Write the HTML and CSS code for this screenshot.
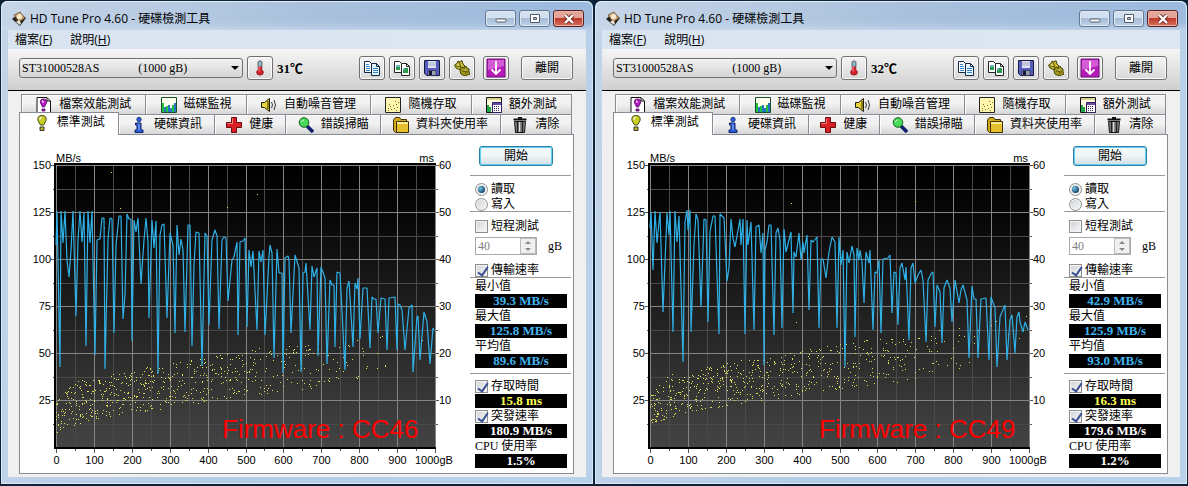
FILE: index.html
```html
<!DOCTYPE html>
<html lang="zh-Hant">
<head>
  <meta charset="UTF-8" />
  <title>HD Tune Pro 4.60 - 硬碟檢測工具</title>
  <link rel="stylesheet" href="styles.css">
</head>
<body>
  <svg class="sprite" aria-hidden="true">
    <symbol id="i-disk" viewBox="0 0 16 16">
      <path d="M1 8 8 2l7 5-6 8z" fill="#26211c"/>
      <path d="M3 4 9 1l5 6-6 4z" fill="#c9a36b" stroke="#5d4630" stroke-width=".7"/>
      <circle cx="8.500" cy="5.500" r="2.600" fill="#f6e8cf"/>
      <path d="m5 11 3-2 2 3-1 2z" fill="#e8e2d8"/>
    </symbol>
    <symbol id="i-temp" viewBox="0 0 16 18">
      <path d="M6 2q2-2 4 0v9q3 2 1 5-3 2-6 0-2-3 1-5z" fill="#d8202a" stroke="#8c1520"/>
      <path d="M6 2q2-2 4 0v5H6z" fill="#8fc0c8" stroke="#557f88"/>
      <path d="M7 7v6" stroke="#ff9a9a"/>
    </symbol>
    <symbol id="i-copy" viewBox="0 0 16 16">
      <path d="M.5 1.500h5l2 2v9h-7z" fill="#fff" stroke="#102a48"/>
      <path d="M7.500 3.500h5l3 3v9h-8z" fill="#e6f4ff" stroke="#102a48"/>
      <path d="M2 4.500h3M2 6.500h4M2 8.500h4M2 10.500h4M9 8.500h5M9 10.500h5M9 12.500h5" stroke="#2f86d0"/>
      <path d="M12.500 3.500v3h3" fill="none" stroke="#102a48"/>
    </symbol>
    <symbol id="i-copyimg" viewBox="0 0 16 16">
      <path d="M.5 1.500h5l2 2v9h-7z" fill="#fff" stroke="#222"/>
      <path d="M7.500 3.500h5l3 3v9h-8z" fill="#fff" stroke="#222"/>
      <path d="M2 5h4v5H2zM9 8h5v5H9z" fill="#2c9a4b"/>
      <path d="M2 5h4v2H2zM9 8h2v2H9z" fill="#6fb5c4"/>
      <path d="M12.500 3.500v3h3" fill="none" stroke="#222"/>
    </symbol>
    <symbol id="i-save" viewBox="0 0 16 16">
      <path d="M.5.5h15v15h-13l-2-2z" fill="#5560bc" stroke="#15183c"/>
      <path d="M4 1h8v7H4z" fill="#dfe3f4"/>
      <path d="M4 3h8M4 5h8" stroke="#a5abc8"/>
      <path d="M4 10.500h8v5H4z" fill="#9aa0ae" stroke="#15183c" stroke-width=".6"/>
      <path d="M5 11h3v4H5z" fill="#15183c"/>
    </symbol>
    <symbol id="i-tools" viewBox="0 0 16 16">
      <path d="M.5 5 3 3.500 4 1l2 1 2-1.500L9 4l2 2-1 2-3 2-3-1-2-1z" fill="#c2b92e" stroke="#4a4508"/>
      <path d="m6 11 1-3 2-1 1 1 2-2 1 2 2 1v3l1 2-3 1-1 1-3-1-2-1z" fill="#a39a1c" stroke="#4a4508"/>
      <path d="m5 2 2 6M2 6l5 1M10 8l2 6M8 11l6 1" stroke="#625b0c"/>
      <path d="M3 5h2M10 10h2" stroke="#f4efb0"/>
    </symbol>
    <symbol id="i-down" viewBox="0 0 20 20">
      <path d="M1 1h18v18H1z" fill="#b31ab8" stroke="#71107a"/>
      <path d="M2 2h16v6L2 12z" fill="#d45bd6"/>
      <path d="M10 3v13M5.500 11.500l4.500 4.500 4.500-4.500" fill="none" stroke="#fff" stroke-width="1.800"/>
    </symbol>
    <symbol id="i-file" viewBox="0 0 16 16">
      <path d="M1 .5h10l3.500 3.500v11.500H1z" fill="#fff" stroke="#111"/>
      <path d="M11 1v3h3" fill="none" stroke="#111"/>
      <path d="M7.500 2q4 0 3 4L8.500 10h-2L4.500 6q-1-4 3-4z" fill="#b01cc0" stroke="#55085f" stroke-width=".8"/>
      <path d="M6 12h3v2H6z" fill="#b01cc0" stroke="#55085f" stroke-width=".8"/>
      <path d="M6 4h1v2" stroke="#fff" fill="none"/>
    </symbol>
    <symbol id="i-bars" viewBox="0 0 16 16">
      <path d="M.5.5h15v15H.5z" fill="#fffff0" stroke="#1a4b2a"/>
      <path d="M1 6h2v9H1zM5 9h2v6H5zM11 8h2v7h-2z" fill="#20c23a"/>
      <path d="M3 10h2v5H3zM7 8h2v7H7zM9 11h2v4H9zM13 6h2v9h-2z" fill="#2673c8"/>
    </symbol>
    <symbol id="i-sound" viewBox="0 0 16 16">
      <path d="M.5 5.500h3l5-4v13l-5-4h-3z" fill="#e6d23a" stroke="#1d1a05"/>
      <path d="M6 4h2v8H6z" fill="#8d8013"/>
      <path d="M10.500 5q2 3 0 6M13 3q3 5 0 10" fill="none" stroke="#333"/>
    </symbol>
    <symbol id="i-random" viewBox="0 0 16 16">
      <path d="M.5.5h15v15H.5z" fill="#fff7b0" stroke="#222"/>
      <path d="M3 11h1v1H3zM5 9h1v1H5zM6 12h1v1H6zM8 8h1v1H8zM9 11h1v1H9zM11 7h1v1h-1zM12 10h1v1h-1zM4 7h1v1H4zM10 4h1v1h-1zM13 5h1v1h-1zM11 13h1v1h-1zM3 13h1v1H3z" fill="#7a6a10"/>
    </symbol>
    <symbol id="i-extra" viewBox="0 0 16 16">
      <path d="M.5.5h15v15H.5z" fill="#fffbe0" stroke="#111"/>
      <path d="M1 1h14v2H1z" fill="#d8cf90"/>
      <path d="M1 8h2v2h2v5H1z" fill="#1ea54a"/>
      <path d="M6.500 5.500h9v10h-9z" fill="#fff" stroke="#31205f"/>
      <path d="M7 6h8v2H7z" fill="#6d4aa8"/>
      <path d="M8 9.500h6M8 11.500h6M8 13.500h6" stroke="#31205f" stroke-dasharray="1 1"/>
    </symbol>
    <symbol id="i-bulb" viewBox="0 0 16 16">
      <path d="M8 .6q5 0 4 5L9.500 10h-3L4 5.600q-1-5 4-5z" fill="#c9cf26" stroke="#45480a"/>
      <path d="M6 5V3l2-1" stroke="#fff" fill="none"/>
      <path d="M6 12h4v3.500H6z" fill="#b8b820" stroke="#333"/>
    </symbol>
    <symbol id="i-info" viewBox="0 0 16 16">
      <circle cx="8" cy="2.500" r="2.200" fill="#2c62e0" stroke="#0c1f66" stroke-width=".8"/>
      <path d="M4.500 6h5.500v7h2v2.500h-8V13H6V8H4.500z" fill="#2c62e0" stroke="#0c1f66"/>
      <path d="M8 7v6" stroke="#8fb4ff"/>
    </symbol>
    <symbol id="i-health" viewBox="0 0 16 16">
      <path d="M5.500.5h5v5h5v5h-5v5h-5v-5h-5v-5h5z" fill="#d81f24" stroke="#6b0a10"/>
      <path d="M6.500 6.500v-5M1.500 6.500h5" stroke="#f58080"/>
    </symbol>
    <symbol id="i-search" viewBox="0 0 16 16">
      <path d="m9 9 6 6" stroke="#10206a" stroke-width="3.500"/>
      <circle cx="6" cy="5.500" r="4.800" fill="#48d85a" stroke="#12601e"/>
      <path d="M3 5q1-2 3-2" stroke="#d8ffd8" fill="none"/>
    </symbol>
    <symbol id="i-folder" viewBox="0 0 16 16">
      <path d="M.5 3l2-2.500h4l1.500 2h5.500v13H2.500l-2-2z" fill="#d3a91c" stroke="#3f3004"/>
      <path d="M3.500 4.500h12v11h-12z" fill="#e6c02c" stroke="#3f3004"/>
      <path d="M4 5h11v2H4z" fill="#fbeb92"/>
    </symbol>
    <symbol id="i-trash" viewBox="0 0 16 16">
      <path d="M1.500 2.500h13M6 1h4" stroke="#111" stroke-width="2"/>
      <path d="M2.500 4.500h11l-1 11h-9z" fill="#8a8a8a" stroke="#111"/>
      <path d="M5.500 5v10M10.500 5v10" stroke="#222" stroke-width="1.500"/>
      <path d="M7.500 5v10" stroke="#e0e0e0"/>
    </symbol>
  </svg>

  <main class="desktop" id="desktop"></main>

  <template id="windowTemplate">
    <form class="window">
      <header class="titlebar">
        <svg class="icon"><use href="#i-disk"/></svg>
        <h1>HD Tune Pro 4.60 - 硬碟檢測工具</h1>
        <button type="button" class="caption" aria-label="最小化"><svg viewBox="0 0 12 10"><rect x="1" y="5" width="10" height="3" rx="1" fill="#fff" stroke="#555d6b"/></svg></button>
        <button type="button" class="caption" aria-label="最大化"><svg viewBox="0 0 12 10"><path d="M1.500.5h9v8h-9zM4.500 3.500h3v2h-3z" fill="#fff" fill-rule="evenodd" stroke="#555d6b"/></svg></button>
        <button type="button" class="caption close" aria-label="關閉"><svg viewBox="0 0 12 10"><path d="m2 1 8 8m0-8-8 8" stroke="#6b2a24" stroke-width="4"/><path d="m2 1 8 8m0-8-8 8" stroke="#fff" stroke-width="2.400"/></svg></button>
      </header>

      <nav class="menubar">
        <button type="button">檔案(<u>F</u>)</button>
        <button type="button">說明(<u>H</u>)</button>
      </nav>

      <div class="toolbar">
        <label class="combo">
          <select aria-label="硬碟">
            <option>ST31000528AS&nbsp;&nbsp;&nbsp;&nbsp;&nbsp;&nbsp;&nbsp;&nbsp;&nbsp;&nbsp;&nbsp;&nbsp;&nbsp;(1000 gB)</option>
          </select>
        </label>
        <button type="button" class="tool" aria-label="溫度"><svg class="icon"><use href="#i-temp"/></svg></button>
        <strong class="temperature"></strong>
        <button type="button" class="tool" aria-label="複製文字"><svg class="icon"><use href="#i-copy"/></svg></button>
        <button type="button" class="tool" aria-label="複製圖片"><svg class="icon"><use href="#i-copyimg"/></svg></button>
        <button type="button" class="tool" aria-label="儲存"><svg class="icon"><use href="#i-save"/></svg></button>
        <button type="button" class="tool" aria-label="選項"><svg class="icon"><use href="#i-tools"/></svg></button>
        <button type="button" class="tool update" aria-label="更新"><svg class="icon large"><use href="#i-down"/></svg></button>
        <button type="button" class="tool exit">離開</button>
      </div>

      <div class="content">
        <div class="tabs back">
          <button type="button"><svg class="icon"><use href="#i-file"/></svg>檔案效能測試</button>
          <button type="button"><svg class="icon"><use href="#i-bars"/></svg>磁碟監視</button>
          <button type="button"><svg class="icon"><use href="#i-sound"/></svg>自動噪音管理</button>
          <button type="button"><svg class="icon"><use href="#i-random"/></svg>隨機存取</button>
          <button type="button"><svg class="icon"><use href="#i-extra"/></svg>額外測試</button>
        </div>
        <div class="tabs front">
          <button type="button" class="active"><svg class="icon"><use href="#i-bulb"/></svg>標準測試</button>
          <button type="button"><svg class="icon"><use href="#i-info"/></svg>硬碟資訊</button>
          <button type="button"><svg class="icon"><use href="#i-health"/></svg>健康</button>
          <button type="button"><svg class="icon"><use href="#i-search"/></svg>錯誤掃瞄</button>
          <button type="button"><svg class="icon"><use href="#i-folder"/></svg>資料夾使用率</button>
          <button type="button"><svg class="icon"><use href="#i-trash"/></svg>清除</button>
        </div>

        <div class="panel">
          <svg class="chart" viewBox="0 0 450 338"></svg>

          <aside class="side">
            <button type="button" class="start">開始</button>
            <hr>
            <label class="row"><input type="radio" name="mode" checked>讀取</label>
            <label class="row"><input type="radio" name="mode">寫入</label>
            <hr class="tight">
            <label class="row"><input type="checkbox">短程測試</label>
            <div class="stroke">
              <span class="spin"><input type="text" value="40" aria-label="容量" disabled><span class="arrows"><i></i><i class="down"></i></span></span>
              gB
            </div>
            <label class="row"><input type="checkbox" checked>傳輸速率</label>
            <hr class="flush">
            <div class="row">最小值</div>
            <output class="speed" data-key="min"></output>
            <div class="row">最大值</div>
            <output class="speed" data-key="max"></output>
            <div class="row">平均值</div>
            <output class="speed" data-key="avg"></output>
            <hr class="last">
            <label class="row"><input type="checkbox" checked>存取時間</label>
            <output class="access" data-key="access"></output>
            <label class="row"><input type="checkbox" checked>突發速率</label>
            <output data-key="burst"></output>
            <div class="row">CPU 使用率</div>
            <output data-key="cpu"></output>
          </aside>
        </div>
      </div>
    </form>
  </template>

  <script src="script.js"></script>
</body>
</html>
```
FILE: styles.css
```css
* {
  box-sizing: border-box;
}

body {
  margin: 0;
  background: #0b2239;
  color: #000;
  font-family: "Liberation Serif", "Noto Sans CJK TC", serif;
  font-size: 12px;
  line-height: 15px;
}

button,
input,
select {
  font: inherit;
  color: inherit;
  margin: 0;
}

button {
  padding: 0;
  cursor: pointer;
}

.sprite {
  position: absolute;
  width: 0;
  height: 0;
}

.icon {
  width: 16px;
  height: 16px;
  flex: none;
}

.icon.large {
  width: 20px;
  height: 20px;
}

.desktop {
  display: grid;
  grid-template-columns: 1fr 1fr;
  min-height: 100vh;
}

/* window frame */
.window {
  display: flex;
  flex-direction: column;
  padding: 0 7px 7px;
  border: 1px solid #0b2239;
  border-bottom-width: 2px;
  border-radius: 7px 7px 0 0;
  background: linear-gradient(100deg, #c3d4e8, #b4cce6 45%, #b9d1ea);
  box-shadow: inset 0 0 0 1px #d9e9f8;
}

.titlebar {
  display: flex;
  align-items: center;
  gap: 3px;
  height: 29px;
  margin: 0 -6px;
  padding: 6px 8px 0 9px;
  border-radius: 6px 6px 0 0;
  background: linear-gradient(90deg, #c6d5e7, #a8c0dc 55%, #9cbade);
  box-shadow: inset 0 1px #e6f0fa, inset 0 -8px 8px -6px #cbdbed;
}

.titlebar h1 {
  flex: 1;
  margin: 0;
  font-family: "Open Sans", "Noto Sans CJK TC", sans-serif;
  font-size: 12px;
  font-weight: normal;
}

.caption {
  display: flex;
  align-items: center;
  justify-content: center;
  width: 31px;
  height: 17px;
  border: 1px solid #66788f;
  border-radius: 3px;
  background: linear-gradient(#d3e0ef 45%, #a7bdd6 50%, #bfd3ea);
  box-shadow: inset 0 0 0 1px #dfeaf6;
}

.caption svg {
  width: 12px;
  height: 10px;
}

.caption.close {
  border-color: #5c1c1c;
  background: linear-gradient(#e3a598 45%, #c0392b 50%, #d4705c);
  box-shadow: inset 0 0 0 1px #eab5aa;
}

.menubar {
  display: flex;
  gap: 18px;
  height: 19px;
  padding-left: 7px;
  background: linear-gradient(90deg, #d9e4f1, #dee7f1);
  font-family: "Open Sans", "Noto Sans CJK TC", sans-serif;
}

.menubar button {
  border: none;
  background: none;
}

/* toolbar */
.toolbar {
  display: flex;
  align-items: center;
  gap: 4px;
  height: 42px;
  padding: 0 13px 3px 11px;
  border-bottom: 1px solid #000;
  background: linear-gradient(#f5f5f5, #cfcfcf);
}

.combo {
  position: relative;
  width: 224px;
}

.combo select {
  appearance: none;
  display: block;
  width: 100%;
  height: 20px;
  padding: 0 2px;
  border: 1px solid #707070;
  border-radius: 3px;
  background: linear-gradient(#f2f2f2, #d4d4d4);
}

.combo::after {
  content: "";
  position: absolute;
  right: 4px;
  top: 8px;
  border: 4px solid transparent;
  border-top-color: #000;
}

.tool {
  display: flex;
  align-items: center;
  justify-content: center;
  width: 26px;
  height: 24px;
  border: 1px solid #707070;
  border-radius: 3px;
  background: linear-gradient(#f4f4f4, #d8d8d8);
  box-shadow: inset 0 0 0 1px #fafafa;
}

.temperature {
  flex: 1;
  font-size: 13px;
}

.tool.update {
  margin-left: 4px;
}

.tool.exit {
  width: 52px;
  margin-left: 8px;
}

/* tabs */
.content {
  flex: 1;
  padding: 3px 12px 3px 11px;
  background: #f0f0f0;
}

.tabs {
  display: flex;
  height: 20px;
  margin-right: 2px;
}

.tabs.back {
  margin-left: 2px;
}

.tabs button {
  flex: 1 1 auto;
  display: flex;
  align-items: center;
  justify-content: center;
  gap: 7px;
  padding: 0 2px;
  border: 1px solid #898c95;
  border-width: 1px 1px 0 0;
  background: linear-gradient(#f2f2f2 45%, #d6d6d6);
  box-shadow: inset 1px 1px #fbfbfb;
}

.tabs button:first-child {
  border-left-width: 1px;
}

.tabs .active {
  position: relative;
  height: 23px;
  margin-top: -2px;
  padding: 0 4px 3px;
  background: #fff;
}

.panel {
  display: flex;
  border: 1px solid #898c95;
  background: #fff;
}

.chart {
  flex: 1;
  min-width: 0;
  font-family: "Liberation Sans", sans-serif;
  font-size: 11px;
}

.chart .line {
  fill: none;
  stroke: #2fb0e6;
  stroke-width: 1.2;
  stroke-linejoin: bevel;
}

.chart .major {
  stroke: #858585;
}

.chart .minor {
  stroke: #4a4a4a;
}

.chart .dots {
  fill: #dede58;
}

.chart .firmware {
  fill: #f00;
  font-size: 26px;
}

/* result column */
.side {
  flex: none;
  width: 103px;
  padding: 11px 2px 0 0;
}

.side hr {
  height: 1px;
  margin: 9px 0 5px;
  border: none;
  background: #999;
}

.side hr.tight {
  margin: 0 0 6px;
}

.side hr.flush {
  margin: 0;
}

.side hr.last {
  margin: 5px 0 4px;
}

.start {
  display: block;
  width: 74px;
  height: 20px;
  margin-left: 9px;
  border: 1px solid #2c7fa6;
  border-radius: 3px;
  background: linear-gradient(#f1f6f9 45%, #d2dde3);
  box-shadow: inset 0 0 0 1px #5fd0f2;
}

.row {
  display: flex;
  align-items: center;
  gap: 3px;
  height: 15px;
  margin-left: 5px;
  padding-top: 1px;
  white-space: nowrap;
}

.row input {
  appearance: none;
  flex: none;
  position: relative;
  width: 13px;
  height: 13px;
  border: 1px solid #8e8f8f;
  background: linear-gradient(135deg, #cfd3d8, #f8f8f8);
  box-shadow: inset 0 0 0 1px #f4f4f4;
}

.row input[type="radio"] {
  border-radius: 50%;
}

.row input[type="radio"]:checked::after {
  content: "";
  position: absolute;
  inset: 2px;
  border-radius: 50%;
  background: radial-gradient(circle at 35% 35%, #6fc6e8, #123f63 75%);
}

.row input[type="checkbox"]:checked::after {
  content: "";
  position: absolute;
  left: 4px;
  top: 0;
  width: 4px;
  height: 9px;
  border: solid #3b4f93;
  border-width: 0 2px 2px 0;
  transform: rotate(35deg);
}

.stroke {
  display: flex;
  align-items: center;
  gap: 11px;
  margin: 4px 0 7px 5px;
}

.spin {
  display: flex;
  width: 62px;
  height: 18px;
  border: 1px solid #aaa;
}

.spin input {
  flex: 1;
  min-width: 0;
  padding: 0 2px;
  border: none;
  background: #fff;
  color: #808080;
}

.arrows {
  display: grid;
  width: 16px;
  border: 1px solid #bbb;
  background: #f0f0f0;
}

.arrows i {
  place-self: center;
  border: 3px solid transparent;
  border-top-width: 0;
  border-bottom-color: #888;
}

.arrows .down {
  border-width: 3px 3px 0;
  border-top-color: #888;
}

.side output {
  display: block;
  height: 14px;
  margin: 1px 4px 0 5px;
  background: #000;
  color: #fff;
  font-size: 13px;
  font-weight: bold;
  line-height: 14px;
  text-align: center;
}

.side .speed {
  color: #3fb4f0;
}

.side .access {
  color: #ffff50;
}
```
FILE: script.js
```js
// trace: transfer rate line, in chart units (x, y)
const runs = [
  {
    temperature: '31℃', firmware: 'CC46', labelX: 202, seed: 46, lift: 0,
    min: '39.3 MB/s', max: '125.8 MB/s', avg: '89.6 MB/s',
    access: '15.8 ms', burst: '180.9 MB/s', cpu: '1.5%',
    trace: '36,110 37,76 40,232 41,76 43,108 45,76 47,125 49,142 51,115 53,76 56,181 58,105 60,76 62,107 64,78 66,211 68,76 70,108 72,76 75,220 77,105 80,104 82,83 84,83 85,234 88,105 90,83 92,84 94,198 96,110 99,81 101,81 103,184 105,160 107,79 109,84 111,84 112,206 114,85 116,97 118,83 121,149 124,105 126,83 128,107 129,183 132,85 134,113 136,86 138,239 140,100 142,90 144,89 147,183 150,98 153,110 155,198 157,90 159,120 161,104 163,115 165,197 168,90 170,90 172,211 174,130 176,97 179,98 182,231 185,98 187,101 189,190 192,105 195,95 197,101 199,194 202,105 204,102 206,103 208,166 212,125 214,122 217,107 218,200 220,107 223,106 225,103 227,192 229,115 231,132 233,116 237,195 239,116 241,127 243,115 245,200 249,122 250,110 252,118 254,223 257,114 259,138 262,138 263,238 265,123 268,121 269,125 271,198 275,120 279,133 281,237 283,138 285,137 286,128 290,195 292,131 294,142 297,133 298,221 301,132 305,143 307,229 310,145 312,150 314,150 315,212 317,137 320,138 325,235 327,153 329,146 333,212 335,148 337,154 338,143 340,204 343,153 347,153 350,213 352,162 354,164 356,164 358,198 361,163 365,164 367,215 369,163 375,162 377,215 378,169 380,170 382,175 385,215 389,173 392,170 393,237 397,182 398,181 400,225 404,177 407,187 410,229 413,193 414,195',
    outliers: [[91, 37], [100, 73], [84, 93], [207, 72], [237, 59], [377, 196], [398, 197], [402, 205]]
  },
  {
    temperature: '32℃', firmware: 'CC49', labelX: 205, seed: 49, lift: 7,
    min: '42.9 MB/s', max: '125.9 MB/s', avg: '93.0 MB/s',
    access: '16.3 ms', burst: '179.6 MB/s', cpu: '1.2%',
    trace: '36,93 37,77 39,135 41,76 43,108 46,77 49,177 53,78 55,100 56,76 59,197 61,76 63,107 65,81 69,227 71,87 73,75 74,95 76,75 77,197 80,110 82,79 84,85 87,172 90,84 92,85 94,187 96,97 99,81 101,81 105,199 106,79 110,83 113,146 115,133 117,84 119,103 121,112 126,84 127,110 129,84 131,199 133,85 134,110 137,87 140,195 142,92 145,90 147,118 149,98 150,230 151,115 153,107 155,90 157,90 160,200 162,98 164,93 166,105 168,193 170,94 172,117 177,97 179,178 180,117 182,122 185,98 187,125 189,107 190,118 193,100 195,175 197,105 199,107 203,102 205,193 207,124 209,124 212,143 215,117 218,102 221,107 223,193 225,102 227,130 229,115 231,232 233,117 235,128 238,111 240,120 241,202 243,113 245,125 246,115 248,127 250,168 252,117 255,128 256,115 259,195 261,137 263,138 265,125 267,198 269,124 274,123 276,120 278,178 280,137 282,138 284,190 286,133 288,128 291,145 292,132 295,205 297,133 299,128 301,148 304,140 307,135 309,145 312,207 314,145 317,139 319,137 321,192 323,150 326,157 328,208 330,153 333,145 336,153 338,187 341,145 345,168 347,155 349,150 353,165 355,223 358,151 360,164 362,164 364,223 367,164 372,163 375,225 377,162 381,173 383,232 386,182 391,170 393,225 396,185 398,180 401,218 403,182 405,177 406,187 409,197 411,187 414,195',
    outliers: [[177, 68], [182, 187], [301, 66], [412, 181], [377, 190], [382, 186], [394, 199], [405, 203]]
  }
];

const LEFT = 36, RIGHT = 415, TOP = 30, BOTTOM = 312;

function random(seed) {
  return () => {
    seed = (seed * 16807) % 2147483647;
    return seed / 2147483647;
  };
}

// interpolate between [x, y] stops
function between(stops, x) {
  for (let i = 1; i < stops.length; i++) {
    const [x0, y0] = stops[i - 1], [x1, y1] = stops[i];
    if (x <= x1) return y0 + (y1 - y0) * (x - x0) / (x1 - x0);
  }
  return stops[stops.length - 1][1];
}

function accessDots(run) {
  const high = [[0, 266], [.05, 246], [.2, 235], [.5, 215], [.7, 205], [1, 192]];
  const low = [[0, 298], [.1, 284], [.2, 278], [.5, 261], [.7, 252], [1, 225]];
  const density = [[0, 1], [.3, .8], [.6, .5], [.7, .35], [.8, .2], [.86, .1], [.88, 0], [1, 0]];
  const next = random(run.seed * 991);
  const dots = run.outliers.slice();
  while (dots.length < 620) {
    const t = next(), keep = next(), depth = next();
    if (keep > between(density, t)) continue;
    const a = between(high, t), b = between(low, t);
    dots.push([Math.round(LEFT + t * 379), Math.round(a + (b - a) * depth - run.lift)]);
  }
  return dots.map(([x, y]) => `M${x} ${y}h1v1h-1z`).join('');
}

function drawChart(svg, run) {
  const id = 'bg' + run.firmware;
  let out = `<defs><linearGradient id="${id}" x2="0" y2="1"><stop stop-color="#000"/><stop offset=".2" stop-color="#080808"/><stop offset="1" stop-color="#444"/></linearGradient></defs>
    <rect x="34" y="28" width="382" height="286"/>
    <rect x="36" y="30" width="379" height="282" fill="url(#${id})"/>`;
  let minor = '', major = '', ticks = '', labels = '';

  for (let i = 0; i <= 20; i++) {
    const x = Math.round(LEFT + i * 18.95) + .5;
    const line = `M${x} ${TOP}V${BOTTOM}`;
    if (i % 2) minor += line; else major += line;
    ticks += `M${x} 314v${i % 2 ? 2 : 4}`;
    if (i % 2 === 0) {
      const gb = i * 50;
      labels += gb === 1000
        ? `<text x="395" y="329">1000gB</text>`
        : `<text x="${x}" y="329" text-anchor="middle">${gb}</text>`;
    }
  }
  for (let i = 0; i < 12; i++) {
    const y = Math.round(TOP + i * 23.5) + .5;
    const line = `M${LEFT} ${y}H${RIGHT}`;
    if (i % 2) minor += line; else major += line;
    ticks += `M${i % 2 ? 33 : 31} ${y}H34M416 ${y}h${i % 2 ? 2 : 3}`;
    if (i % 2 === 0) {
      labels += `<text x="31" y="${y + 3.5}" text-anchor="end">${150 - i * 12.5}</text>`;
      labels += `<text x="419" y="${y + 3.5}">${60 - i * 5}</text>`;
    }
  }

  out += `<path class="minor" d="${minor}"/><path class="major" d="${major}"/><path d="${ticks}" stroke="#555"/>`;
  out += `<path class="dots" d="${accessDots(run)}" shape-rendering="crispEdges"/>`;
  out += `<polyline class="line" points="${run.trace}"/>`;
  out += labels + '<text x="36" y="27">MB/s</text><text x="414" y="27" text-anchor="end">ms</text>';
  out += `<text class="firmware" x="${run.labelX}" y="303">Firmware : ${run.firmware}</text>`;
  svg.innerHTML = out;
}

const template = document.getElementById('windowTemplate');
runs.forEach(run => {
  const win = template.content.cloneNode(true);
  win.querySelector('.temperature').textContent = run.temperature;
  win.querySelectorAll('[data-key]').forEach(el => {
    el.textContent = run[el.dataset.key];
  });
  drawChart(win.querySelector('.chart'), run);
  document.getElementById('desktop').appendChild(win);
});
```
